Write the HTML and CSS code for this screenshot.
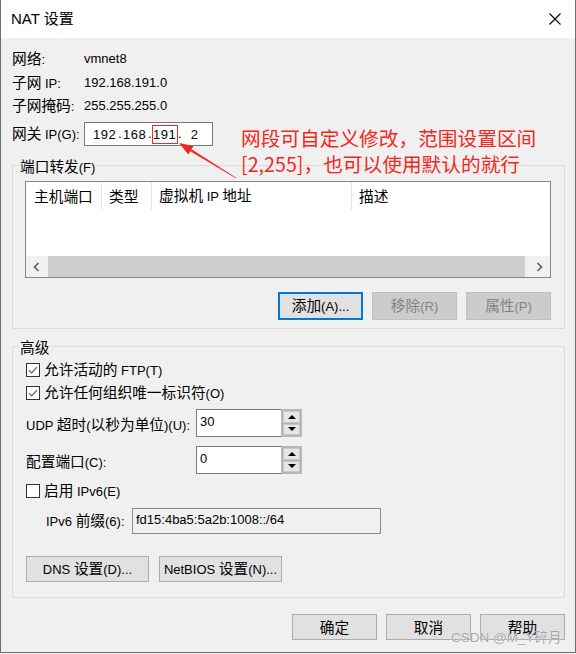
FILE: index.html
```html
<!DOCTYPE html>
<html lang="zh-CN">
<head>
<meta charset="utf-8">
<title>NAT 设置</title>
<link rel="stylesheet" href="styles.css">
</head>
<body>
<div class="window">
  <header class="titlebar">
    <span class="title">NAT 设置</span>
    <svg class="close" width="12" height="12" viewBox="0 0 12 12"><path d="M0.5 0.5 L11.5 11.5 M11.5 0.5 L0.5 11.5" stroke="#000" stroke-width="1.1" fill="none"/></svg>
  </header>
  <main class="content">
    <div class="info">
      <div class="row r1"><span class="lbl"><span class="z">网络</span>:</span><span>vmnet8</span></div>
      <div class="row r2"><span class="lbl"><span class="z">子网</span> IP:</span><span>192.168.191.0</span></div>
      <div class="row r3"><span class="lbl"><span class="z">子网掩码</span>:</span><span>255.255.255.0</span></div>
      <div class="row r4"><span class="lbl"><span class="z">网关</span> IP(G):</span>
        <div class="ipbox"><span class="oct">192</span><span class="dot">.</span><span class="oct">168</span><span class="dot">.</span><span class="oct hl">191</span><span class="dot">.</span><span class="oct">2</span></div>
      </div>
    </div>

    <fieldset class="group pf">
      <legend><span class="z">端口转发</span>(F)</legend>
      <div class="pf-body">
        <div class="listview">
          <div class="lv-head">
            <div class="col c1"><span class="z">主机端口</span></div>
            <div class="col c2"><span class="z">类型</span></div>
            <div class="col c3"><span><span class="z">虚拟机</span> IP <span class="z">地址</span></span></div>
            <div class="col c4"><span class="z">描述</span></div>
          </div>
          <div class="lv-body"></div>
          <div class="hscroll">
            <span class="sb-btn"><svg width="7" height="10" viewBox="0 0 7 10"><path d="M5.5 1 L1.5 5 L5.5 9" stroke="#606060" stroke-width="1.6" fill="none"/></svg></span>
            <span class="sb-thumb"></span>
            <span class="sb-track"></span>
            <span class="sb-btn"><svg width="7" height="10" viewBox="0 0 7 10"><path d="M1.5 1 L5.5 5 L1.5 9" stroke="#606060" stroke-width="1.6" fill="none"/></svg></span>
          </div>
        </div>
        <div class="btnrow">
          <button class="btn wide focus"><span><span class="z">添加</span>(A)...</span></button>
          <button class="btn wide dis"><span><span class="z">移除</span>(R)</span></button>
          <button class="btn wide dis"><span><span class="z">属性</span>(P)</span></button>
        </div>
      </div>
    </fieldset>

    <fieldset class="group adv">
      <legend><span class="z">高级</span></legend>
      <div class="adv-body">
        <div class="cbrow first"><span class="cb"><svg width="12" height="12" viewBox="0 0 12 12"><path d="M2 6.2 L4.6 8.8 L10 3.2" stroke="#5a5a5a" stroke-width="1.2" fill="none"/></svg></span><span><span class="z">允许活动的</span> FTP(T)</span></div>
        <div class="cbrow"><span class="cb"><svg width="12" height="12" viewBox="0 0 12 12"><path d="M2 6.2 L4.6 8.8 L10 3.2" stroke="#5a5a5a" stroke-width="1.2" fill="none"/></svg></span><span><span class="z">允许任何组织唯一标识符</span>(O)</span></div>
        <div class="spinrow udp">
          <span class="spin-lbl">UDP <span class="z">超时</span>(<span class="z">以秒为单位</span>)(U):</span>
          <div class="spin">
            <div class="spin-input">30</div>
            <div class="spin-btns"><span class="sbtn"><i class="tri up"></i></span><span class="sbtn"><i class="tri down"></i></span></div>
          </div>
        </div>
        <div class="spinrow cfg">
          <span class="spin-lbl"><span class="z">配置端口</span>(C):</span>
          <div class="spin">
            <div class="spin-input">0</div>
            <div class="spin-btns"><span class="sbtn"><i class="tri up"></i></span><span class="sbtn"><i class="tri down"></i></span></div>
          </div>
        </div>
        <div class="cbrow ipv6"><span class="cb"></span><span><span class="z">启用</span> IPv6(E)</span></div>
        <div class="prefixrow">
          <span class="prefix-lbl">IPv6 <span class="z">前缀</span>(6):</span>
          <div class="prefix-input">fd15:4ba5:5a2b:1008::/64</div>
        </div>
        <div class="advbtns">
          <button class="btn mid"><span>DNS <span class="z">设置</span>(D)...</span></button>
          <button class="btn mid"><span>NetBIOS <span class="z">设置</span>(N)...</span></button>
        </div>
      </div>
    </fieldset>

    <div class="footer">
      <button class="btn ft"><span class="z">确定</span></button>
      <button class="btn ft"><span class="z">取消</span></button>
      <button class="btn ft"><span class="z">帮助</span></button>
    </div>
  </main>

  <div class="note">网段可自定义修改，范围设置区间<br>[2,255]，也可以使用默认的就行</div>
  <svg class="arrow" width="576" height="654" viewBox="0 0 576 654">
    <polygon points="236.2,177.7 235.8,178.3 190.3,151.3 191.5,149.3" fill="#f0261c"/>
    <polygon points="179,143 193.5,146.1 188.3,154.6" fill="#f0261c"/>
  </svg>
  <div class="watermark">CSDN @M_Y碎月</div>
</div>
</body>
</html>
```

FILE: styles.css
```css
* { box-sizing: border-box; }
html, body { margin: 0; padding: 0; }
body {
  width: 576px;
  height: 654px;
  overflow: hidden;
  background: #f0f0f0;
  font-family: "Liberation Sans", "Noto Sans CJK SC", sans-serif;
  font-size: 13px;
  line-height: 16px;
  color: #000;
}
.z { font-family: "Noto Sans CJK SC", sans-serif; font-size: 14.7px; }

.window {
  position: relative;
  width: 576px;
  height: 653px;
  border: 1px solid #6f6f6f;
  border-top: none;
  background: #f0f0f0;
  display: flex;
  flex-direction: column;
}

.titlebar {
  flex: none;
  height: 38px;
  background: #fff;
  display: flex;
  align-items: center;
  justify-content: space-between;
  padding: 0 14px 0 10px;
}
.title { font-size: 15px; }
.close { display: block; }

.content {
  flex: 1;
  display: flex;
  flex-direction: column;
  padding: 0 10px 0 11px;
}

/* info rows */
.info { padding-top: 9px; }
.row { display: flex; align-items: center; height: 23px; }
.r2 { margin-top: 1px; }
.r4 { margin-top: 5px; height: 24px; }
.lbl { width: 72px; flex: none; }
.ipbox {
  width: 129px;
  height: 24px;
  background: #fff;
  border: 1px solid #7a7a7a;
  display: flex;
  align-items: center;
  padding-left: 6.7px;
}
.oct {
  width: 26px;
  height: 19px;
  line-height: 17px;
  text-align: center;
  border: 1px solid transparent;
  letter-spacing: 0.6px;
}
.oct.hl { border-color: #ee2a1d; }
.dot { width: 4px; text-align: center; }

/* group boxes */
.group {
  margin: 0;
  padding: 0;
  border: 1px solid #dcdcdc;
  min-width: 0;
}
.group legend {
  margin-left: 6px;
  padding: 0 1px;
  height: 17px;
  line-height: 17px;
}
.pf { margin-top: 11px; }
.pf-body { padding: 7px 13px 8px 12px; }

.listview {
  height: 97px;
  border: 1px solid #828790;
  background: #fff;
  display: flex;
  flex-direction: column;
}
.lv-head { height: 28px; display: flex; flex: none; }
.col {
  display: flex;
  align-items: center;
  padding-left: 7px;
  border-right: 1px solid #e5e5e5;
  white-space: nowrap;
}
.c1 { width: 76px; padding-left: 8px; }
.c2 { width: 50px; }
.c3 { width: 200px; }
.c4 { flex: 1; border-right: none; }
.lv-body { flex: 1; }
.hscroll { height: 21px; flex: none; display: flex; background: #f0f0f0; }
.sb-btn { width: 21px; display: flex; align-items: center; justify-content: center; flex: none; }
.sb-btn svg { display: block; }
.sb-thumb { width: 477px; margin-left: 1px; background: #cdcdcd; flex: none; }
.sb-track { flex: 1; }

.btn {
  font: inherit;
  color: #000;
  background: #e1e1e1;
  border: 1px solid #adadad;
  padding: 0;
  margin: 0;
  display: flex;
  align-items: center;
  justify-content: center;
  white-space: nowrap;
}
.btnrow { display: flex; justify-content: flex-end; gap: 9px; margin-top: 14px; }
.btn.wide { width: 85px; height: 28px; }
.btn.focus { border: 2px solid #0078d7; }
.btn.dis { background: #cccccc; border-color: #bfbfbf; color: #838383; }

/* advanced */
.adv { margin-top: 9px; }
.adv-body { padding: 0 13px 15px 13px; }
.cbrow { display: flex; align-items: center; height: 23px; }
.cbrow.first { margin-top: 3px; }
.cbrow.ipv6 { margin-top: 5px; }
.cb {
  width: 14px;
  height: 14px;
  border: 1px solid #333;
  background: #fff;
  margin-right: 4px;
  flex: none;
}
.cb svg { display: block; }

.spinrow { display: flex; align-items: center; height: 28px; }
.spinrow.udp { margin-top: 5px; }
.spinrow.cfg { margin-top: 9px; }
.spin-lbl { width: 170px; flex: none; padding-top: 3px; }
.spin { display: flex; width: 106px; height: 28px; }
.spin-input {
  flex: 1;
  background: #fff;
  border: 1px solid #7a7a7a;
  border-right: none;
  padding: 4px 3px 0;
}
.spin-btns {
  width: 21px;
  border: 1px solid #b9b9b9;
  background: #b4b4b4;
  padding: 1px;
  display: flex;
  flex-direction: column;
  gap: 1px;
}
.sbtn {
  flex: 1;
  background: #e6e6e6;
  border: 1px solid #c8c8c8;
  display: flex;
  align-items: center;
  justify-content: center;
}
.tri { width: 0; height: 0; border-left: 4px solid transparent; border-right: 4px solid transparent; }
.tri.up { border-bottom: 4px solid #000; }
.tri.down { border-top: 4px solid #000; }

.prefixrow { display: flex; align-items: center; height: 26px; margin-top: 6px; padding-left: 20px; }
.prefix-lbl { width: 86px; flex: none; }
.prefix-input {
  width: 249px;
  height: 26px;
  border: 1px solid #8a8a8a;
  background: #f0f0f0;
  padding: 3px 3px 0;
}

.advbtns { display: flex; gap: 10px; margin-top: 22px; }
.btn.mid { width: 123px; height: 26px; }

.footer { display: flex; justify-content: flex-end; gap: 9px; margin-top: 16px; }
.btn.ft { width: 85px; height: 26px; }

/* overlays */
.note {
  position: absolute;
  left: 240px;
  top: 125px;
  font-family: "Noto Sans CJK SC", sans-serif;
  font-size: 19.7px;
  line-height: 26px;
  color: #f4271c;
  white-space: nowrap;
}
.arrow { position: absolute; left: -1px; top: 0; pointer-events: none; }
.watermark {
  position: absolute;
  left: 450px;
  top: 630px;
  font-size: 13.5px;
  line-height: 16px;
  color: #a8a8a8;
  text-shadow: 0 0 1px rgba(255,255,255,0.9);
  white-space: nowrap;
}
```
